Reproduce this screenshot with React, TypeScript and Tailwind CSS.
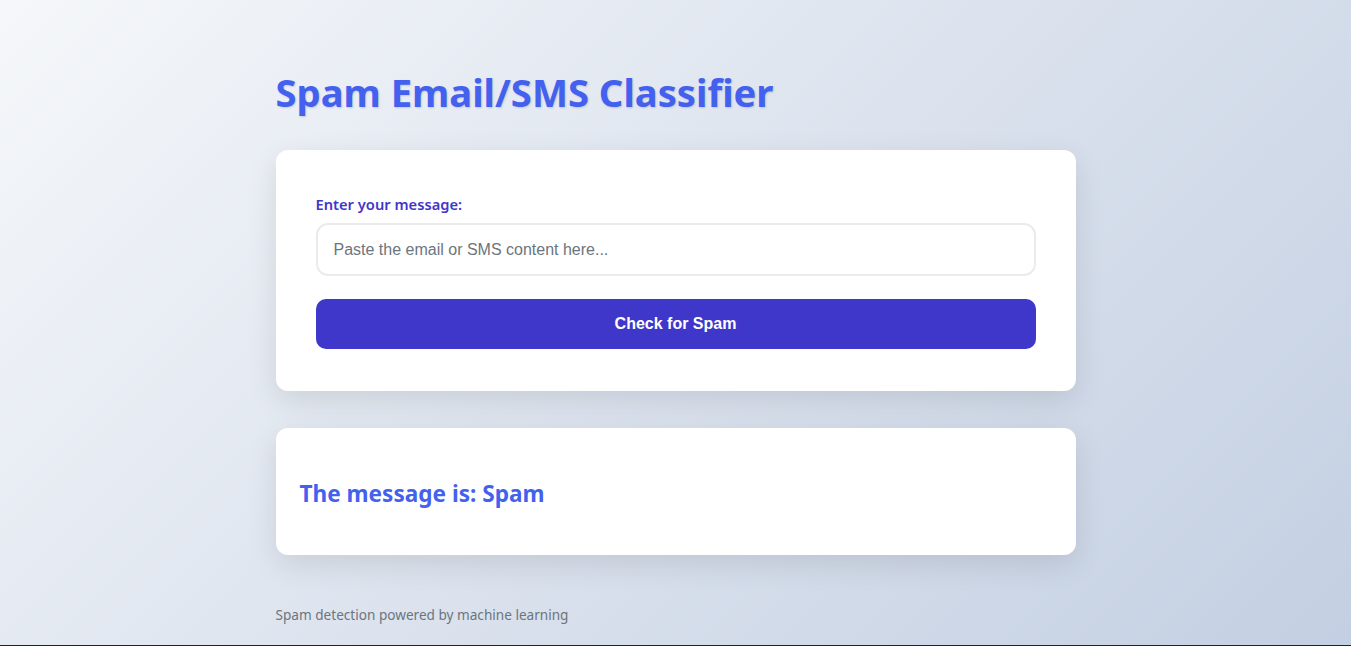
export default function App() {
  return (
    <div
      className="min-h-[646px] w-full bg-[linear-gradient(135deg,#f5f7fa_0%,#c3cfe2_100%)] border-b border-[#222]"
      style={{ fontFamily: '"Segoe UI", "Noto Sans", sans-serif' }}
    >
      <div className="mx-auto w-[800px] pt-[68px] pb-[20px]">
        <h1 className="text-[38.2px] leading-[48px] font-bold text-[#4361ee] [text-shadow:1px_1px_2px_rgba(0,0,0,0.15)]">
          Spam Email/SMS Classifier
        </h1>
        <div className="mt-[34px] rounded-[12px] bg-white px-[40px] pt-[44px] pb-[42px] shadow-[0_10px_30px_rgba(0,0,0,0.1)]">
          <label className="block text-[14.7px] leading-[20px] font-semibold text-[#3f37c9]">
            Enter your message:
          </label>
          <input
            className="mt-[9px] block h-[53px] w-full rounded-[12px] border-2 border-[#e9ecef] px-[16px] text-[16px] outline-none placeholder:text-[#6c757d]"
            style={{ fontFamily: '"Liberation Sans", Arial, sans-serif' }}
            placeholder="Paste the email or SMS content here..."
          />
          <button
            className="mt-[23px] block h-[50px] w-full rounded-[10px] bg-[#3f37c9] text-[16px] font-bold text-white"
            style={{ fontFamily: '"Liberation Sans", Arial, sans-serif' }}
          >
            Check for Spam
          </button>
        </div>
        <div className="mt-[37px] flex h-[127px] items-center rounded-[12px] bg-white px-[24px] pt-[4px] shadow-[0_10px_30px_rgba(0,0,0,0.1)]">
          <h2 className="text-[22.6px] font-bold text-[#4361ee]">The message is: Spam</h2>
        </div>
        <p className="mt-[50px] text-[13.6px] text-[#6c757d]">Spam detection powered by machine learning</p>
      </div>
    </div>
  );
}
